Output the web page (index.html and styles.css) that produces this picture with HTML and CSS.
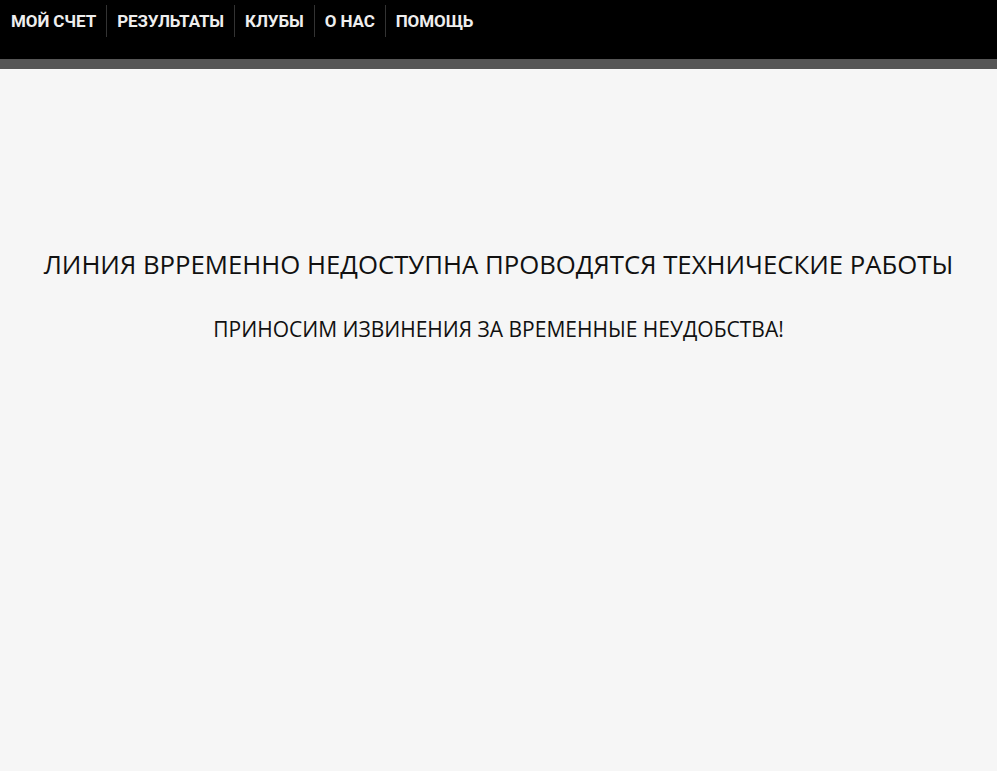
FILE: index.html
```html
<!DOCTYPE html>
<html lang="ru">
<head>
<meta charset="utf-8">
<link rel="stylesheet" href="styles.css">
</head>
<body>
<header class="top">
  <nav class="menu">
    <a class="item" href="#">МОЙ СЧЕТ</a>
    <a class="item" href="#">РЕЗУЛЬТАТЫ</a>
    <a class="item" href="#">КЛУБЫ</a>
    <a class="item" href="#">О НАС</a>
    <a class="item" href="#">ПОМОЩЬ</a>
  </nav>
</header>
<div class="strip"></div>
<main class="notice">
  <h1 class="title">ЛИНИЯ ВРРЕМЕННО НЕДОСТУПНА ПРОВОДЯТСЯ ТЕХНИЧЕСКИЕ РАБОТЫ</h1>
  <p class="sub">ПРИНОСИМ ИЗВИНЕНИЯ ЗА ВРЕМЕННЫЕ НЕУДОБСТВА!</p>
</main>
</body>
</html>
```
FILE: styles.css
```css
html, body {
  margin: 0;
  padding: 0;
  background: #f6f6f6;
}
body {
  font-family: "Open Sans", "Noto Sans", sans-serif;
  color: #111;
}
.top {
  background: #000;
  height: 59px;
}
.menu {
  display: flex;
  align-items: flex-start;
  padding-top: 5px;
}
.item {
  font-family: Roboto, "Liberation Sans", sans-serif;
  font-weight: 700;
  font-size: 17px;
  letter-spacing: -0.1px;
  color: #eee;
  text-decoration: none;
  line-height: 32px;
  padding: 0 10px;
  border-left: 1px solid #333;
}
.item:first-child {
  border-left: none;
  padding-left: 11px;
}
.strip {
  height: 10px;
  background: #555;
}
.notice {
  text-align: center;
  padding-top: 178px;
}
.title {
  margin: 0;
  font-weight: 400;
  font-size: 25.75px;
  line-height: 34px;
}
.sub {
  margin: 35px 0 0;
  font-size: 21px;
  line-height: 26px;
}
```
